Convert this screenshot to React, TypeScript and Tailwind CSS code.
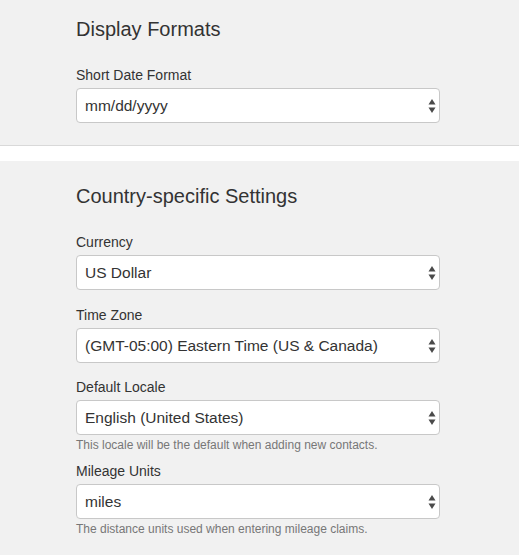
import React from "react";

function Arrows() {
  return (
    <svg width="8" height="15" viewBox="0 0 8 15" className="absolute right-[3px] top-1/2 -translate-y-1/2">
      <path d="M4 0.5 L7.5 6 L0.5 6 Z" fill="#4a4a4a" />
      <path d="M4 14.5 L7.5 9 L0.5 9 Z" fill="#4a4a4a" />
    </svg>
  );
}

function SelectBox({ value }: { value: string }) {
  return (
    <div className="relative h-[35px] w-[364px] rounded-[4px] border border-[#c8c8c8] bg-white pl-[8px] flex items-center text-[15.5px] text-[#333]">
      {value}
      <Arrows />
    </div>
  );
}

function Field({
  label,
  value,
  help,
  className = "",
}: {
  label: string;
  value: string;
  help?: string;
  className?: string;
}) {
  return (
    <div className={className}>
      <div className="text-[14px] leading-[20px] text-[#333] mb-[3px]">{label}</div>
      <SelectBox value={value} />
      {help && (
        <p className="text-[12px] leading-[17px] text-[#777] mt-[2px]">{help}</p>
      )}
    </div>
  );
}

export default function App() {
  return (
    <div
      className="w-[519px] h-[555px] overflow-hidden bg-white"
      style={{ fontFamily: '"Liberation Sans", Arial, sans-serif' }}
    >
      <section className="bg-[#f1f1f1] border-b border-[#d9d9d9] pl-[76px] pt-[16px] pb-[22px]">
        <h3 className="text-[20px] leading-[26px] text-[#333]">Display Formats</h3>
        <Field className="mt-[23px]" label="Short Date Format" value="mm/dd/yyyy" />
      </section>

      <section className="mt-[15px] bg-[#f1f1f1] pl-[76px] pt-[22px] pb-[40px]">
        <h3 className="text-[20px] leading-[26px] text-[#333]">Country-specific Settings</h3>
        <Field className="mt-[23px]" label="Currency" value="US Dollar" />
        <Field className="mt-[15px]" label="Time Zone" value="(GMT-05:00) Eastern Time (US & Canada)" />
        <Field
          className="mt-[14px]"
          label="Default Locale"
          value="English (United States)"
          help="This locale will be the default when adding new contacts."
        />
        <Field
          className="mt-[7px]"
          label="Mileage Units"
          value="miles"
          help="The distance units used when entering mileage claims."
        />
      </section>
    </div>
  );
}
